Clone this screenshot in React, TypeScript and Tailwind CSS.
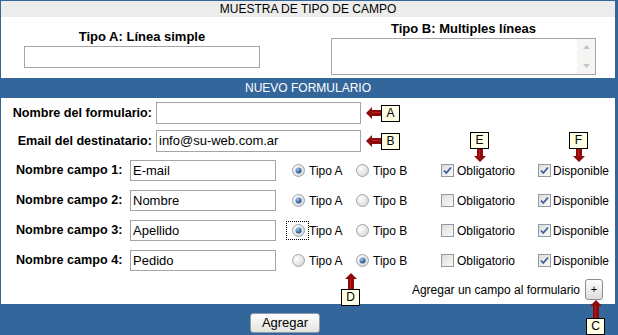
import type { ReactNode } from "react";

const rows = [
  { n: 1, value: "E-mail", tipo: "A", obligatorio: true, focus: false },
  { n: 2, value: "Nombre", tipo: "A", obligatorio: false, focus: false },
  { n: 3, value: "Apellido", tipo: "A", obligatorio: false, focus: true },
  { n: 4, value: "Pedido", tipo: "B", obligatorio: false, focus: false },
];

export default function App() {
  return (
    <div className="w-[618px] h-[335px] bg-[#33669a] pt-[1px] pl-[1px] pr-[3px] font-['Liberation_Sans',Arial,sans-serif] text-black overflow-hidden">
      <div className="h-[16px] bg-[#ececec] text-center text-[12px] leading-[16px]">MUESTRA DE TIPO DE CAMPO</div>

      <div className="h-[61px] bg-white flex">
        <div className="w-[282px] flex flex-col items-center pt-[12px]">
          <div className="font-bold text-[13px] leading-[15px]">Tipo A: Línea simple</div>
          <TextBox className="mt-[2px] w-[236px] h-[22px]" />
        </div>
        <div className="pl-[48px] pt-[4px] flex flex-col">
          <div className="w-[265px] text-center font-bold text-[13px] leading-[15px]">Tipo B: Multiples líneas</div>
          <div className="mt-[2px] w-[265px] h-[37px] border border-[#a5a5a5] bg-white flex justify-end">
            <div className="w-[18px] h-full bg-[#f5f5f3] flex flex-col items-center justify-between py-[6px]">
              <svg width="7" height="4" viewBox="0 0 7 4"><path d="M0 4 L3.5 0 L7 4 Z" fill="#c4c4c4" /></svg>
              <svg width="7" height="4" viewBox="0 0 7 4"><path d="M0 0 L3.5 4 L7 0 Z" fill="#c4c4c4" /></svg>
            </div>
          </div>
        </div>
      </div>

      <div className="h-[20px] text-center text-white text-[12px] leading-[20px]">NUEVO FORMULARIO</div>

      <div className="relative h-[206px] bg-white pt-[4px]">
        <div className="flex items-center h-[22px]">
          <Label className="w-[155px] pr-[4px] text-right">Nombre del formulario:</Label>
          <TextBox className="w-[205px] h-[22px]" />
          <Arrow dir="left" className="ml-[5px]" />
          <Tag>A</Tag>
        </div>
        <div className="flex items-center h-[22px] mt-[6px]">
          <Label className="w-[155px] pr-[4px] text-right">Email del destinatario:</Label>
          <TextBox className="w-[205px] h-[22px]" value="info@su-web.com.ar" />
          <Arrow dir="left" className="ml-[5px]" />
          <Tag>B</Tag>
        </div>

        <div className="mt-[8px] flex flex-col gap-[9px]">
          {rows.map((r) => (
            <div key={r.n} className="flex items-center h-[21px] text-[12px]">
              <Label className="w-[129px] pl-[15px]">Nombre campo {r.n}:</Label>
              <TextBox className="w-[146px] h-[21px]" value={r.value} />
              <div className="ml-[10px] w-[66px] flex items-center">
                <div className={`h-[19px] pl-[5px] pr-[3px] flex items-center border border-dotted ${r.focus ? "border-black" : "border-transparent"}`}>
                  <Radio checked={r.tipo === "A"} />
                </div>
                <span>Tipo A</span>
              </div>
              <div className="w-[89px] flex items-center">
                <div className="h-[19px] pl-[4px] pr-[4px] flex items-center">
                  <Radio checked={r.tipo === "B"} />
                </div>
                <span>Tipo B</span>
              </div>
              <div className="w-[97px] flex items-center gap-[3px]">
                <Check checked={r.obligatorio} />
                <span>Obligatorio</span>
              </div>
              <div className="flex items-center gap-[2px]">
                <Check checked />
                <span>Disponible</span>
              </div>
            </div>
          ))}
        </div>

        <div className="mt-[8px] flex items-center justify-end pr-[12px] gap-[5px] text-[12px]">
          <span>Agregar un campo al formulario</span>
          <button className="w-[18px] h-[21px] rounded-[3px] border border-[#8c8c8c] bg-gradient-to-b from-[#ffffff] to-[#dcdcdc] text-[11px] leading-none">+</button>
        </div>

        <div className="absolute left-[469px] top-[34px] flex flex-col items-center">
          <Tag>E</Tag>
          <Arrow dir="down" />
        </div>
        <div className="absolute left-[568px] top-[34px] flex flex-col items-center">
          <Tag>F</Tag>
          <Arrow dir="down" />
        </div>
        <div className="absolute left-[340px] top-[175px] flex flex-col items-center">
          <Arrow dir="up" length={16} />
          <Tag>D</Tag>
        </div>
        <div className="absolute left-[585px] top-[202px] flex flex-col items-center">
          <Arrow dir="up" length={18} />
          <Tag>C</Tag>
        </div>
      </div>

      <div className="h-[31px] pt-[6px] pl-[249px]">
        <button className="w-[70px] h-[20px] rounded-[3px] border border-[#8f9aa8] bg-gradient-to-b from-[#fefefe] to-[#e2e2de] text-[13px] leading-[18px]">Agregar</button>
      </div>
    </div>
  );
}

function Label({ className, children }: { className?: string; children: ReactNode }) {
  return <div className={`font-bold text-[12.6px] whitespace-nowrap ${className ?? ""}`}>{children}</div>;
}

function TextBox({ className, value }: { className?: string; value?: string }) {
  return (
    <div className={`border border-[#a5a5a5] bg-white pl-[2px] text-[13px] leading-[19px] whitespace-nowrap overflow-hidden ${className ?? ""}`}>
      {value}
    </div>
  );
}

function Tag({ children }: { children: ReactNode }) {
  return (
    <div className="w-[19px] h-[17px] border border-black bg-[#ffffe6] text-center text-[12px] leading-[15px]">{children}</div>
  );
}

function Radio({ checked }: { checked: boolean }) {
  return (
    <svg width="13" height="13" viewBox="0 0 13 13">
      <defs>
        <radialGradient id="rbg" cx="0.35" cy="0.35" r="0.7">
          <stop offset="0" stopColor="#ffffff" />
          <stop offset="1" stopColor="#d8d8d4" />
        </radialGradient>
        <radialGradient id="rdot" cx="0.35" cy="0.3" r="0.7">
          <stop offset="0" stopColor="#9fc4ec" />
          <stop offset="1" stopColor="#1f4f8f" />
        </radialGradient>
      </defs>
      <circle cx="6.5" cy="6.5" r="6" fill="url(#rbg)" stroke="#9aa6b4" />
      {checked && <circle cx="6.5" cy="6.5" r="3" fill="url(#rdot)" />}
    </svg>
  );
}

function Check({ checked }: { checked: boolean }) {
  return (
    <svg width="13" height="13" viewBox="0 0 13 13">
      <defs>
        <linearGradient id="cbg" x1="0" y1="0" x2="1" y2="1">
          <stop offset="0" stopColor="#dcdcd6" />
          <stop offset="1" stopColor="#fbfbfb" />
        </linearGradient>
      </defs>
      <rect x="0.5" y="0.5" width="12" height="12" fill="url(#cbg)" stroke="#8c9aab" />
      {checked && <path d="M3 6.5 L5.3 9 L10 3.5" fill="none" stroke="#3b5f9e" strokeWidth="1.8" />}
    </svg>
  );
}

function Arrow({ dir, className, length }: { dir: "left" | "down" | "up"; className?: string; length?: number }) {
  if (dir === "left") {
    return (
      <svg width="15" height="12" viewBox="0 0 15 12" className={className}>
        <path d="M0 6 L6 0 L6 3 L15 3 L15 9 L6 9 L6 12 Z" fill="#8e0b0b" />
        <path d="M6 5 L15 5 L15 6 L6 6 Z" fill="#c21a1a" />
      </svg>
    );
  }
  if (dir === "down") {
    return (
      <svg width="12" height="13" viewBox="0 0 12 13" className={className}>
        <path d="M3 0 L9 0 L9 7 L12 7 L6 13 L0 7 L3 7 Z" fill="#8e0b0b" />
        <path d="M5 0 L6 0 L6 8 L5 8 Z" fill="#c21a1a" />
      </svg>
    );
  }
  const h = length ?? 16;
  return (
    <svg width="12" height={h} viewBox={`0 0 12 ${h}`} className={className}>
      <path d={`M6 0 L12 6 L9 6 L9 ${h} L3 ${h} L3 6 L0 6 Z`} fill="#8e0b0b" />
      <path d={`M5 6 L6 6 L6 ${h} L5 ${h} Z`} fill="#c21a1a" />
    </svg>
  );
}
